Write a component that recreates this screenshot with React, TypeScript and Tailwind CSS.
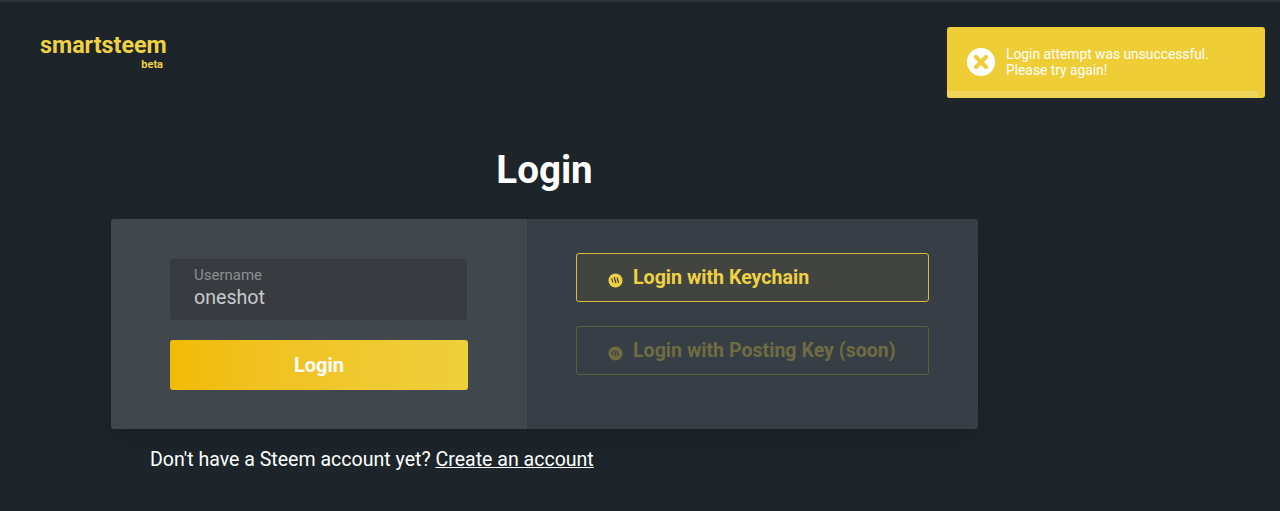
import React from 'react';

function SteemIcon({ className, ink }: { className?: string; ink: string }) {
  return (
    <svg viewBox="0 0 16 16" className={className}>
      <circle cx="8" cy="8" r="7.5" fill="currentColor" />
      <path
        d="M4.2 6.2c-.5 1 .9 1.7.9 3.4M7 4.8c-.7 1.5 1.4 2.8 1.2 5.6M10 5.4c-.7 1.3 1.1 2.4 1 4.6"
        fill="none"
        stroke={ink}
        strokeWidth="1.3"
        strokeLinecap="round"
      />
    </svg>
  );
}

export default function App() {
  return (
    <div className="relative h-[511px] overflow-hidden bg-[#1d252a] font-['Roboto',sans-serif] border-t-2 border-[#2f3338]">
      {/* Header */}
      <div className="pl-10 pt-[30px] h-[121px]">
        <div className="w-[127px]">
          <div className="text-[23.3px] leading-[26px] font-bold text-[#efd244]">smartsteem</div>
          <div className="text-[11px] leading-[13px] font-bold text-[#efd244] text-right pr-[4px]">beta</div>
        </div>
      </div>

      {/* Toast */}
      <div className="absolute left-[947px] top-[25px] w-[318px] h-[71px] rounded-[3px] bg-[#efcd36] overflow-hidden">
        <div className="flex items-center h-full pl-5 pb-[1px]">
          <svg viewBox="0 0 28 28" className="w-[28px] h-[28px] shrink-0">
            <circle cx="14" cy="14" r="14" fill="#ffffff" />
            <path d="M9 9l10 10M19 9L9 19" stroke="#efcd36" strokeWidth="4.2" strokeLinecap="round" />
          </svg>
          <div className="ml-[11px] text-[13.8px] leading-4 text-white">
            Login attempt was unsuccessful.
            <br />
            Please try again!
          </div>
        </div>
        <div className="absolute left-0 bottom-0 w-[311px] h-[7px] bg-[#f0d55a]" />
      </div>

      {/* Main */}
      <div className="ml-[111px] w-[867px]">
        <h1 className="text-center text-[38.5px] leading-[48px] font-bold text-white mt-[23px]">Login</h1>
        <div className="flex h-[210px] mt-[25px] rounded-[3px] overflow-hidden shadow-[0_8px_24px_rgba(0,0,0,0.12)]">
          <div className="w-[416px] bg-[#41484d] pl-[59px] pt-10">
            <div className="w-[297px] h-[61px] rounded-[3px] bg-[#383c41] pl-6 pt-2">
              <div className="text-[15px] leading-4 text-[#8b8e92]">Username</div>
              <div className="text-[19.6px] leading-[28px] text-[#c9cacc] mt-[1px]">oneshot</div>
            </div>
            <button className="mt-5 w-[298px] h-[50px] rounded-[3px] bg-gradient-to-r from-[#f2bb05] to-[#eecf3c] text-white text-[20px] font-bold">
              Login
            </button>
          </div>
          <div className="flex-1 bg-[#383e45] pl-[49px] pt-[34px]">
            <button className="flex items-center w-[353px] h-[49px] pt-[1px] rounded-[3px] border border-[#d9bc3e] bg-[#42453f] pl-[31px] text-[19.6px] font-bold text-[#efd244]">
              <SteemIcon ink="#3b3f3a" className="w-[15px] h-[15px] mt-[4px] shrink-0" />
              <span className="ml-[10px]">Login with Keychain</span>
            </button>
            <button className="flex items-center w-[353px] h-[49px] pt-[1px] mt-6 rounded-[3px] border border-[#5d5f3f] pl-[31px] text-[19.6px] font-bold text-[#6e6c42]">
              <SteemIcon ink="#383e45" className="w-[15px] h-[15px] mt-[4px] shrink-0" />
              <span className="ml-[10px]">Login with Posting Key (soon)</span>
            </button>
          </div>
        </div>
        <p className="mt-[18px] ml-[39px] text-[19.56px] leading-[26px] text-white">
          Don't have a Steem account yet? <a className="underline">Create an account</a>
        </p>
      </div>
    </div>
  );
}
